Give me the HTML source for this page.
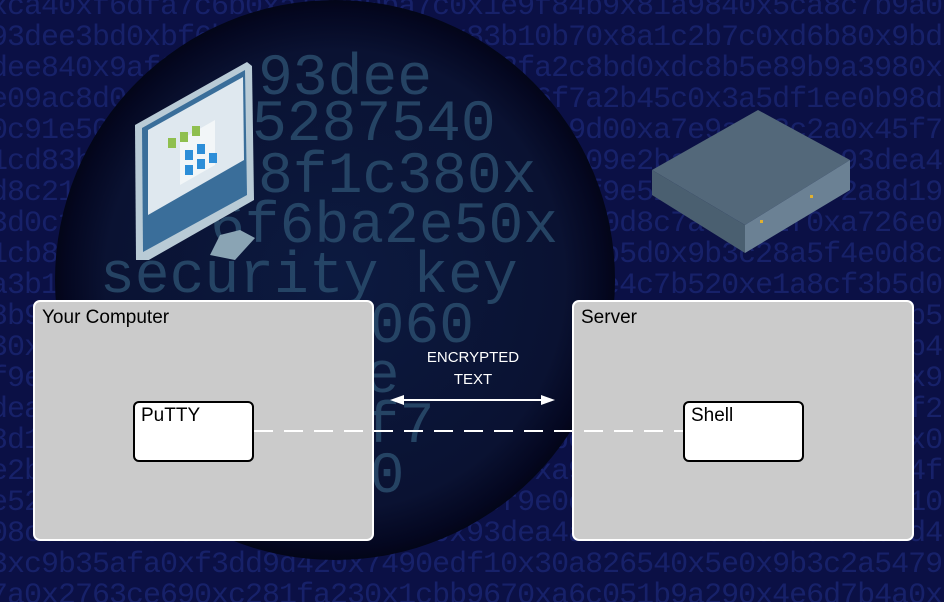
<!DOCTYPE html>
<html style="overflow:hidden"><head><meta charset="utf-8"><style>
html,body{margin:0;width:944px;height:602px;overflow:hidden}
body{background:#0b1045;position:relative;font-family:"Liberation Sans",sans-serif}
.bgtxt{position:absolute;left:-10px;top:-8px;width:980px;height:610px;overflow:hidden;font-family:"Liberation Mono",monospace;font-size:30px;line-height:31px;color:#1a2672;opacity:.8;word-break:break-all;letter-spacing:-1px}
.circ{position:absolute;left:55px;top:0px;width:560px;height:560px;border-radius:50%;background:radial-gradient(circle,#0c1a40 0%,#0a1232 58%,#040720 68%,#010209 76%,rgba(2,3,14,.6) 80%,rgba(3,5,20,0) 84%)}
.big{position:absolute;font-family:"Liberation Mono",monospace;font-size:58px;line-height:56px;color:#2c5070;white-space:pre;opacity:.8}
.box{position:absolute;background:#cbcbcb;border:2px solid #fff;border-radius:7px;box-sizing:border-box}
.box span{position:absolute;left:7px;top:5px;font-size:19px;color:#000}
.inner{position:absolute;background:#fff;border:2px solid #000;border-radius:6px;box-sizing:border-box}
.inner span{position:absolute;left:6px;top:2px;font-size:19px}
</style></head><body>
<div class="bgtxt">xca40xf6dfa7c6b0xa1f0e0ba7c0x1e9f84b9x81a9840x5ca8c7b9a0x93dee3bd0xbf6bbf40x1e9f8490x83b10b70x8a1c2b7c0xd6b80x9bd6dee840x9af20e1ca7e56b0x93569cf2fa2c8bd0xdc8b5e89b9a3980x7e09ac8d0xa72db4aa5ea0xfe6b7cc5986f7a2b45c0x3a5df1ee0b98df0c91e50x8f0dd0xa4a2a9e7f8d1a567f0b9d00xa7e9a9c3c2a0x45f7c1cd83b960x8b9be2df910e08c5a7c8b040x09e2ba4c1a4b50x93dea4ad8c21c0b5930xa91a69d4e31c7e0x3b20x4f9e5230c93580xf2a8d19e3d0c10xb43f9e0c1d8a6e2f0x9b3c28a5f4e0d8c7a3b1e2f0xa726e0c1cb8f5a2b90xd3a1f0x9e4c7b520xe1a8cf3b5d0x9b3c28a5f4e0d8c7a3b1e2f0xa726e0c1cb8f5a2b90xd3a1f0x9e4c7b520xe1a8cf3b5d0x8b9be2df910e08c5a7c8b040x09e2ba4c1a4b50x93dea4ad8c21c0b5930xa91a69d4e31c7e0x3b20x4f9e5230c93580xf2a8d19e3d0c10xb43f9e0c1d8a6e2f0x8b9be2df910e08c5a7c8b040x09e2ba4c1a4b50x93dea4ad8c21c0b5930xa91a69d4e31c7e0x3b20x4f9e5230c93580xf2a8d19e3d0c10xb43f9e0c1d8a6e2f0x8b9be2df910e08c5a7c8b040x09e2ba4c1a4b50x93dea4ad8c21c0b5930xa91a69d4e31c7e0x3b20x4f9e5230c93580xf2a8d19e3d0c10xb43f9e0c1d8a6e2f0x8b9be2df910e08c5a7c8b040x09e2ba4c1a4b50x93dea4ad8c21c0b5930xa91a69d4e3xc9b35afa0xf3dd9d420x7490edf10x30a826540x5e0x9b3c2a547987a0x2763ce690xc281fa230x1cbb9670xa6c051b9a290x4e6d7b4a0x8c3fd19e20x7c6e5a547987a0x2763ce690xc281fa230x1cbb9670xa6c051b9a290x4e6d7b4a0x8c3fd19e2</div>
<div class="circ"></div>
<div class="big" style="left:258px;top:52px">93dee</div>
<div class="big" style="left:252px;top:98px">5287540</div>
<div class="big" style="left:258px;top:150px">8f1c380x</div>
<div class="big" style="left:210px;top:200px">6f6ba2e50x</div>
<div class="big" style="left:100px;top:250px">security key</div>
<div class="big" style="left:300px;top:300px">38060</div>
<div class="big" style="left:330px;top:350px">6e</div>
<div class="big" style="left:330px;top:400px">2f7</div>
<div class="big" style="left:300px;top:450px">8e0</div>
<svg style="position:absolute;left:130px;top:60px" width="125" height="200" viewBox="0 0 125 200">
<polygon points="90,175 110,170 125,178 105,200 80,195" fill="#8aa4b4"/>
<polygon points="5,65 117,2 122,6 124,140 10,205 6,200" fill="#b9cbd6"/>
<polygon points="12,68 115,10 117,135 13,192" fill="#3a6e9a"/>
<polygon points="18,70 113,17 114,100 18,155" fill="#dfe8ef"/>
<polygon points="50,80 85,60 85,105 50,125" fill="#f2f6f8"/>
<g fill="#8fbf4f"><rect x="38" y="78" width="8" height="10"/><rect x="50" y="72" width="8" height="10"/><rect x="62" y="66" width="8" height="10"/></g>
<g fill="#2d8ed8"><rect x="55" y="90" width="8" height="10"/><rect x="67" y="84" width="8" height="10"/><rect x="55" y="105" width="8" height="10"/><rect x="67" y="99" width="8" height="10"/><rect x="79" y="93" width="8" height="10"/></g>
</svg>
<svg style="position:absolute;left:650px;top:105px" width="205" height="150" viewBox="0 0 205 150">
<polygon points="2,65 108,5 200,55 95,120" fill="#53687a"/>
<polygon points="2,65 95,120 95,148 2,90" fill="#4a5f70"/>
<polygon points="95,120 200,55 200,85 95,148" fill="#6b8194"/>
<g fill="#e0b030"><rect x="110" y="115" width="3" height="3"/><rect x="160" y="90" width="3" height="3"/></g>
</svg>
<div class="box" style="left:33px;top:300px;width:341px;height:241px"><span>Your Computer</span></div>
<div class="box" style="left:572px;top:300px;width:342px;height:241px"><span>Server</span></div>
<div class="inner" style="left:133px;top:401px;width:121px;height:61px"><span>PuTTY</span></div>
<div class="inner" style="left:683px;top:401px;width:121px;height:61px"><span>Shell</span></div>
<div style="position:absolute;left:400px;top:347px;width:146px;text-align:center;color:#fff;font-size:15px;line-height:22px">ENCRYPTED<br>TEXT</div>
<svg style="position:absolute;left:0;top:0" width="944" height="602">
<line x1="254" y1="431" x2="683" y2="431" stroke="#fff" stroke-width="2" stroke-dasharray="19,11"/>
<line x1="398" y1="400" x2="547" y2="400" stroke="#fff" stroke-width="2"/>
<polygon points="390,400 404,395 404,405" fill="#fff"/>
<polygon points="555,400 541,395 541,405" fill="#fff"/>
</svg>
</body></html>
